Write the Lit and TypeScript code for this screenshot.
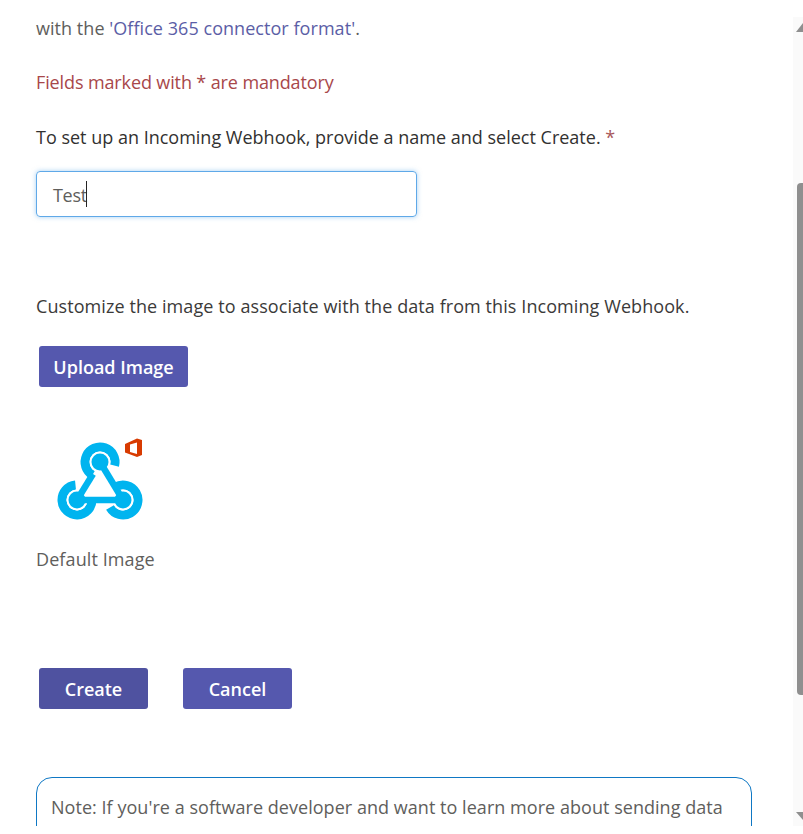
import { LitElement, html, css } from 'lit';
import { customElement } from 'lit/decorators.js';

@customElement('app-root')
class AppRoot extends LitElement {
  static styles = css`
    :host {
      display: block;
      height: 826px;
      overflow: hidden;
      background: #fff;
      font-family: 'Open Sans', 'Noto Sans', sans-serif;
      font-size: 18px;
      line-height: 24px;
      color: #605e5c;
    }
    .page {
      display: flex;
      height: 826px;
    }
    .content {
      flex: 1;
      padding: 16px 0 0 36px;
      overflow: hidden;
    }
    p {
      margin: 0;
    }
    a {
      color: #5b5ea6;
      text-decoration: none;
    }
    .intro {
      letter-spacing: 0.05px;
    }
    .mandatory {
      margin-top: 30px;
      color: #a8474a;
      letter-spacing: -0.12px;
    }
    .prompt {
      margin-top: 31px;
      color: #323130;
    }
    .star {
      color: #a8575a;
    }
    .name-field {
      display: flex;
      align-items: center;
      box-sizing: border-box;
      width: 381px;
      height: 46px;
      margin-top: 22px;
      padding: 1px 0 0 16px;
      border: 1px solid #5fa9e8;
      border-radius: 4px;
      box-shadow: 0 0 5px rgba(95, 169, 232, 0.55);
    }
    .typed {
      letter-spacing: -0.3px;
    }
    .caret {
      width: 1px;
      height: 26px;
      margin: -1px 0 0 -1px;
      background: #252423;
    }
    .customize {
      margin-top: 77px;
      color: #3b3a39;
      letter-spacing: 0.08px;
    }
    button {
      display: block;
      height: 41px;
      padding: 0;
      border: none;
      border-radius: 3px;
      background: #5558ae;
      color: #fff;
      font: 600 18px/24px 'Open Sans', 'Noto Sans', sans-serif;
    }
    .upload {
      width: 149px;
      margin: 28px 0 0 3px;
    }
    .logo {
      display: block;
      width: 100px;
      height: 100px;
      margin: 43px 0 0 14px;
    }
    .default-label {
      margin-top: 17px;
      letter-spacing: 0.1px;
    }
    .actions {
      display: flex;
      gap: 35px;
      margin: 97px 0 0 3px;
    }
    .actions button {
      width: 109px;
    }
    .actions .hovered {
      background: #4f52a0;
    }
    .note {
      box-sizing: border-box;
      width: 716px;
      height: 120px;
      margin-top: 68px;
      padding: 17px 14px;
      border: 1px solid #0f78c4;
      border-radius: 16px;
      letter-spacing: 0.04px;
      white-space: nowrap;
    }
    .scrollbar {
      display: flex;
      flex-direction: column;
      align-items: flex-end;
      flex: none;
      width: 10px;
      margin-top: 17px;
      background: #fafafa;
    }
    .arrow {
      display: block;
      flex: none;
    }
    .arrow-up {
      margin-top: 6px;
    }
    .thumb {
      flex: none;
      width: 6px;
      height: 512px;
      margin-top: 151px;
      border-radius: 4px 0 0 4px;
      background: #8f8f8f;
    }
    .arrow-down {
      margin-top: 117px;
    }
  `;

  render() {
    return html`
      <div class="page">
        <main class="content">
          <p class="intro">with the <a href="#">'Office 365 connector format'</a>.</p>
          <p class="mandatory">Fields marked with * are mandatory</p>
          <p class="prompt">
            To set up an Incoming Webhook, provide a name and select Create.
            <span class="star">*</span>
          </p>
          <div class="name-field"><span class="typed">Test</span><span class="caret"></span></div>
          <p class="customize">
            Customize the image to associate with the data from this Incoming Webhook.
          </p>
          <button class="upload">Upload Image</button>
          ${this._renderLogo()}
          <p class="default-label">Default Image</p>
          <div class="actions">
            <button class="hovered">Create</button>
            <button>Cancel</button>
          </div>
          <div class="note">
            Note: If you're a software developer and want to learn more about sending data
          </div>
        </main>
        <div class="scrollbar">
          <svg class="arrow arrow-up" width="7" height="9" viewBox="0 0 7 9">
            <path d="M7 0V9H0Z" fill="#8f8f8f" />
          </svg>
          <div class="thumb"></div>
          <svg class="arrow arrow-down" width="7" height="8" viewBox="0 0 7 8">
            <path d="M0 0H7V8Z" fill="#8f8f8f" />
          </svg>
        </div>
      </div>
    `;
  }

  // viewBox matches page pixels from (50,430)
  private _renderLogo() {
    return html`
      <svg class="logo" viewBox="0 0 100 100">
        <g fill="none" stroke="#00b4ef" stroke-width="9">
          <path d="M64.600 35.600A15 15 0 1 0 42.500 45" />
          <path d="M25.500 55A15 15 0 1 0 42 70" />
          <path d="M65.500 57A15 15 0 1 1 60 77.500" />
        </g>
        <g fill="#fff">
          <circle cx="50" cy="32" r="10.500" />
          <circle cx="27" cy="70" r="10.500" />
          <circle cx="73" cy="70" r="10.500" />
        </g>
        <g fill="none" stroke="#00b4ef" stroke-width="6.500">
          <path d="M43 44L27 70" />
          <path d="M50 32L73 70" />
          <path d="M27 70H73" />
        </g>
        <g fill="#00b4ef">
          <circle cx="50" cy="32" r="8.500" />
          <circle cx="27" cy="70" r="8.500" />
          <circle cx="73" cy="70" r="8.500" />
        </g>
        <path
          fill-rule="evenodd"
          d="M75 14L87 8.500 92 10V25L87 27 75 22.500ZM80 14.500V22L87 24V12.500Z"
          fill="#d83b01"
        />
      </svg>
    `;
  }
}
